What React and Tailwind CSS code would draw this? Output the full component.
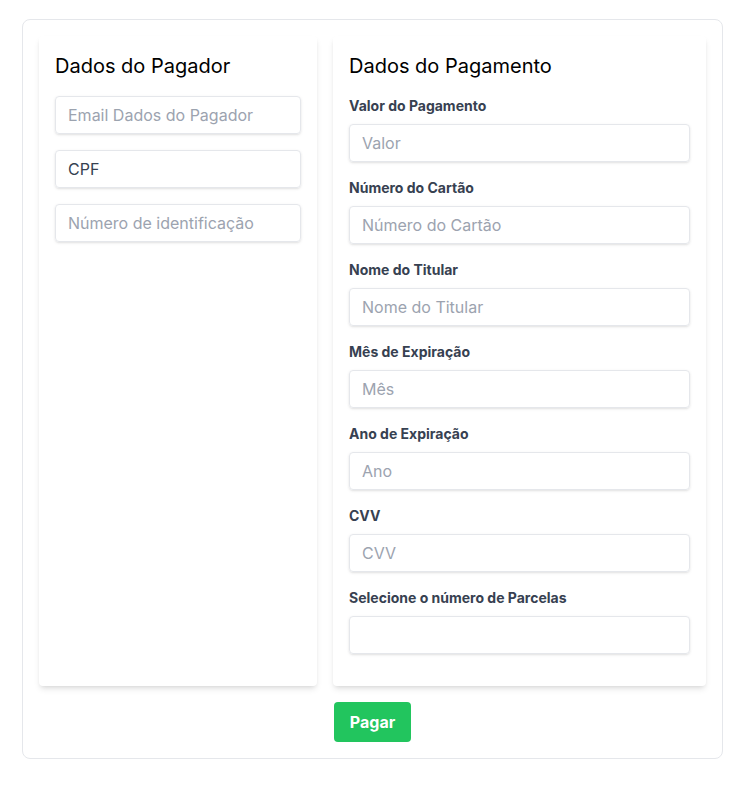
import React from 'react';

const inputClass =
  'shadow appearance-none border border-[#e5e7eb] rounded w-full py-2 px-3 text-[#374151] leading-tight placeholder:text-[#9ca3af] focus:outline-none';

const Field = ({ label, placeholder }) => (
  <div className="mb-4">
    <label className="block text-[#374151] text-sm font-bold mb-2">{label}</label>
    <input type="text" className={inputClass} placeholder={placeholder} />
  </div>
);

export default function App() {
  return (
    <div className="min-h-screen bg-white pt-[19px] pl-[22px]" style={{ fontFamily: 'Inter, "Noto Sans", sans-serif' }}>
      <div className="w-[701px] border border-[#e5e7eb] rounded-lg p-4">
        <div className="flex gap-4">
          {/* Pagador */}
          <div className="w-[278px] bg-white rounded shadow-md p-4">
            <h2 className="text-xl text-black mb-4">Dados do Pagador</h2>
            <div className="mb-4">
              <input type="text" className={inputClass} placeholder="Email Dados do Pagador" />
            </div>
            <div className="mb-4">
              <input type="text" className={inputClass} defaultValue="CPF" />
            </div>
            <div className="mb-4">
              <input type="text" className={inputClass} placeholder="Número de identificação" />
            </div>
          </div>

          {/* Pagamento */}
          <div className="flex-1 bg-white rounded shadow-md p-4">
            <h2 className="text-xl text-black mb-4">Dados do Pagamento</h2>
            <Field label="Valor do Pagamento" placeholder="Valor" />
            <Field label="Número do Cartão" placeholder="Número do Cartão" />
            <Field label="Nome do Titular" placeholder="Nome do Titular" />
            <Field label="Mês de Expiração" placeholder="Mês" />
            <Field label="Ano de Expiração" placeholder="Ano" />
            <Field label="CVV" placeholder="CVV" />
            <div className="mb-4">
              <label className="block text-[#374151] text-sm font-bold mb-2">Selecione o número de Parcelas</label>
              <div className={inputClass + ' h-[38px]'}></div>
            </div>
          </div>
        </div>

        <div className="flex justify-center mt-4">
          <button className="bg-[#22c55e] text-white font-bold py-2 px-4 rounded">Pagar</button>
        </div>
      </div>
    </div>
  );
}
